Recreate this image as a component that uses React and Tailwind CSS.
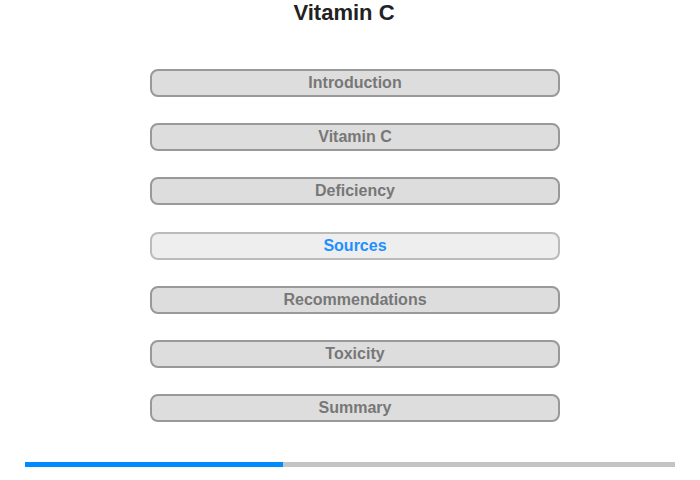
const sections = [
  { label: 'Introduction' },
  { label: 'Vitamin C' },
  { label: 'Deficiency' },
  { label: 'Sources', active: true },
  { label: 'Recommendations' },
  { label: 'Toxicity' },
  { label: 'Summary' },
];

const App = () => {
  return (
    <div className="w-[700px] h-[480px] bg-white font-['Liberation_Sans',Arial,sans-serif] flex flex-col">
      <h1 className="text-center pr-[12px] text-[22px] leading-[25px] font-bold text-[#222]">Vitamin C</h1>

      {/* 목차 버튼 */}
      <div className="mt-[44px] pl-[10px] flex flex-col items-center gap-[26.2px]">
        {sections.map((s) => (
          <button
            key={s.label}
            className={`w-[410px] h-[28px] rounded-[8px] border-2 flex items-center justify-center text-[16px] font-bold ${
              s.active
                ? 'bg-[#eeeeee] border-[#bbbbbb] text-[#1e90ff]'
                : 'bg-[#dddddd] border-[#999999] text-[#777777]'
            }`}
          >
            {s.label}
          </button>
        ))}
      </div>

      {/* 진행 바 */}
      <div className="mt-[40px] mx-[25px] h-[5px] bg-[#c4c4c4] flex">
        <div className="w-[258px] h-full bg-[#008cff]"></div>
      </div>
    </div>
  );
};

export default App;
